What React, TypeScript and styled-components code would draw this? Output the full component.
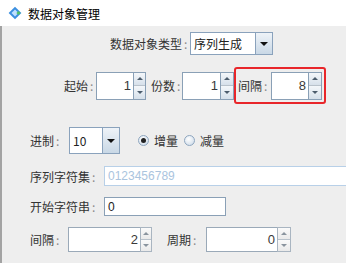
import React from "react";
import styled, { createGlobalStyle } from "styled-components";

const Global = createGlobalStyle`
  html, body { margin: 0; padding: 0; background: #eeeeee; }
  body { font-family: "Noto Sans CJK SC", "Noto Sans", sans-serif; }
`;

const Window = styled.div`
  width: 346px;
  height: 263px;
  overflow: hidden;
  background: #eeeeee;
  display: flex;
  flex-direction: column;
`;

const TitleBar = styled.div`
  height: 26px;
  flex: none;
  background: #ffffff;
  display: flex;
  align-items: center;
  padding-left: 8px;
  gap: 6px;
  font-size: 12px;
  color: #000;
`;

const Body = styled.div`
  flex: 1;
  border-left: 2px solid #a3a3a3;
  display: flex;
  flex-direction: column;
  overflow: hidden;
`;

const Row = styled.div<{ $top: number; $left: number; $h: number }>`
  display: flex;
  align-items: center;
  margin-top: ${({ $top }) => $top}px;
  padding-left: ${({ $left }) => $left}px;
  height: ${({ $h }) => $h}px;
  flex: none;
`;

const Label = styled.span<{ $w?: number }>`
  font-size: 12px;
  color: #333;
  white-space: nowrap;
  width: ${({ $w }) => ($w ? `${$w}px` : "auto")};
  flex: none;
`;

const Colon = styled.span`
  color: #8a8a8a;
  margin-left: 2px;
`;

const Combo = styled.div<{ $w: number; $h: number }>`
  display: flex;
  width: ${({ $w }) => $w}px;
  height: ${({ $h }) => $h}px;
  border: 1px solid #8aa2bc;
  box-sizing: border-box;
  background: #fff;
  flex: none;
`;

const ComboText = styled.div`
  flex: 1;
  display: flex;
  align-items: center;
  padding-left: 3px;
  font-size: 12px;
  color: #222;
  border-right: 1px solid #8aa2bc;
`;

const ComboArrow = styled.div`
  width: 16px;
  background: linear-gradient(#eef3f8, #c9d8e6);
  display: flex;
  align-items: center;
  justify-content: center;
  &::after {
    content: "";
    border-left: 4px solid transparent;
    border-right: 4px solid transparent;
    border-top: 4px solid #111;
  }
`;

const Spin = styled.div<{ $w: number; $h: number }>`
  display: flex;
  width: ${({ $w }) => $w}px;
  height: ${({ $h }) => $h}px;
  flex: none;
`;

const SpinField = styled.div<{ $soft?: boolean }>`
  flex: 1;
  background: #fff;
  border: 1px solid ${({ $soft }) => ($soft ? "#9aa9b8" : "#8aa0b6")};
  border-right: none;
  display: flex;
  align-items: center;
  justify-content: flex-end;
  padding-right: 2px;
  font-family: "Liberation Sans", Arial, sans-serif;
  font-size: 13px;
  color: #3a3a3a;
`;

const SpinButtons = styled.div<{ $w: number; $soft?: boolean }>`
  width: ${({ $w }) => $w}px;
  display: flex;
  flex-direction: column;
  border: 1px solid ${({ $soft }) => ($soft ? "#a9b5c1" : "#8aa0b6")};
  box-sizing: border-box;
`;

const SpinBtn = styled.div<{ $up?: boolean; $soft?: boolean }>`
  flex: 1;
  display: flex;
  align-items: center;
  justify-content: center;
  background: ${({ $soft }) =>
    $soft ? "linear-gradient(#fafafa, #eaeaea)" : "linear-gradient(#f4f7fa, #d6e0ea)"};
  & + & {
    border-top: 1px solid ${({ $soft }) => ($soft ? "#b9c2cb" : "#8aa0b6")};
  }
  &::after {
    content: "";
    border-left: 3px solid transparent;
    border-right: 3px solid transparent;
    ${({ $up, $soft }) =>
      $up
        ? `border-bottom: 3px solid ${$soft ? "#8a949e" : "#4c5c6c"};`
        : `border-top: 3px solid ${$soft ? "#8a949e" : "#4c5c6c"};`}
  }
`;

const Highlight = styled.div`
  display: flex;
  align-items: center;
  height: 37px;
  box-sizing: border-box;
  border: 2px solid #e8262a;
  border-radius: 3px;
  padding: 0 2px;
`;

const Radio = styled.span<{ $on?: boolean }>`
  width: 11px;
  height: 11px;
  border-radius: 50%;
  box-sizing: border-box;
  border: 1px solid #8ea6bf;
  background: radial-gradient(circle at 40% 35%, #ffffff, #c7d6e6);
  display: flex;
  align-items: center;
  justify-content: center;
  flex: none;
  margin-right: 5px;
  &::after {
    content: "";
    width: 5px;
    height: 5px;
    border-radius: 50%;
    background: ${({ $on }) => ($on ? "#222" : "transparent")};
  }
`;

const RadioItem = styled.label<{ $ml: number }>`
  display: flex;
  align-items: center;
  margin-left: ${({ $ml }) => $ml}px;
  font-size: 12px;
  color: #333;
`;

const TextField = styled.div<{ $w: number; $h: number; $disabled?: boolean }>`
  width: ${({ $w }) => $w}px;
  height: ${({ $h }) => $h}px;
  box-sizing: border-box;
  flex: none;
  background: #fff;
  border: 1px solid ${({ $disabled }) => ($disabled ? "#b8d0e8" : "#8aa0b6")};
  display: flex;
  align-items: center;
  padding-left: 3px;
  font-family: "Liberation Sans", Arial, sans-serif;
  font-size: 12px;
  color: ${({ $disabled }) => ($disabled ? "#aac4de" : "#222")};
`;

const Gap = styled.span<{ $w: number }>`
  width: ${({ $w }) => $w}px;
  flex: none;
`;

const AppIcon = () => (
  <svg width="14" height="14" viewBox="0 0 14 14">
    <rect x="2.5" y="2.5" width="9" height="9" transform="rotate(45 7 7)" fill="#3b8fe0" />
    <rect x="4.5" y="4.5" width="5" height="5" transform="rotate(45 7 7)" fill="#bfe0ff" />
    <rect x="9" y="5.5" width="3" height="3" transform="rotate(45 10.5 7)" fill="#4fbf6a" />
  </svg>
);

const Spinner = ({ value, w, h, bw, soft }: { value: string; w: number; h: number; bw: number; soft?: boolean }) => (
  <Spin $w={w} $h={h}>
    <SpinField $soft={soft}>{value}</SpinField>
    <SpinButtons $w={bw} $soft={soft}>
      <SpinBtn $up $soft={soft} />
      <SpinBtn $soft={soft} />
    </SpinButtons>
  </Spin>
);

const L = ({ text, w }: { text: string; w?: number }) => (
  <Label $w={w}>
    {text}
    <Colon>:</Colon>
  </Label>
);

export default function App() {
  return (
    <Window>
      <Global />
      <TitleBar>
        <AppIcon />
        数据对象管理
      </TitleBar>
      <Body>
        <Row $top={6} $left={108} $h={23}>
          <L text="数据对象类型" w={80} />
          <Combo $w={83} $h={23}>
            <ComboText>序列生成</ComboText>
            <ComboArrow />
          </Combo>
        </Row>
        <Row $top={12} $left={62} $h={37}>
          <L text="起始" w={32} />
          <Spinner value="1" w={50} h={28} bw={13} />
          <Gap $w={5} />
          <L text="份数" w={31} />
          <Spinner value="1" w={52} h={28} bw={14} />
          <Highlight>
            <L text="间隔" w={33} />
            <Spinner value="8" w={51} h={28} bw={14} />
          </Highlight>
        </Row>
        <Row $top={23} $left={28} $h={27}>
          <L text="进制" w={39} />
          <Combo $w={51} $h={27}>
            <ComboText>10</ComboText>
            <ComboArrow />
          </Combo>
          <RadioItem $ml={18}>
            <Radio $on />
            增量
          </RadioItem>
          <RadioItem $ml={6}>
            <Radio />
            减量
          </RadioItem>
        </Row>
        <Row $top={12} $left={28} $h={20}>
          <L text="序列字符集" w={74} />
          <TextField $w={260} $h={20} $disabled>
            0123456789
          </TextField>
        </Row>
        <Row $top={11} $left={28} $h={19}>
          <L text="开始字符串" w={74} />
          <TextField $w={122} $h={19}>
            0
          </TextField>
        </Row>
        <Row $top={11} $left={28} $h={25}>
          <L text="间隔" w={38} />
          <Spinner value="2" w={84} h={25} bw={12} soft />
          <Gap $w={15} />
          <L text="周期" w={39} />
          <Spinner value="0" w={85} h={25} bw={14} soft />
        </Row>
      </Body>
    </Window>
  );
}
